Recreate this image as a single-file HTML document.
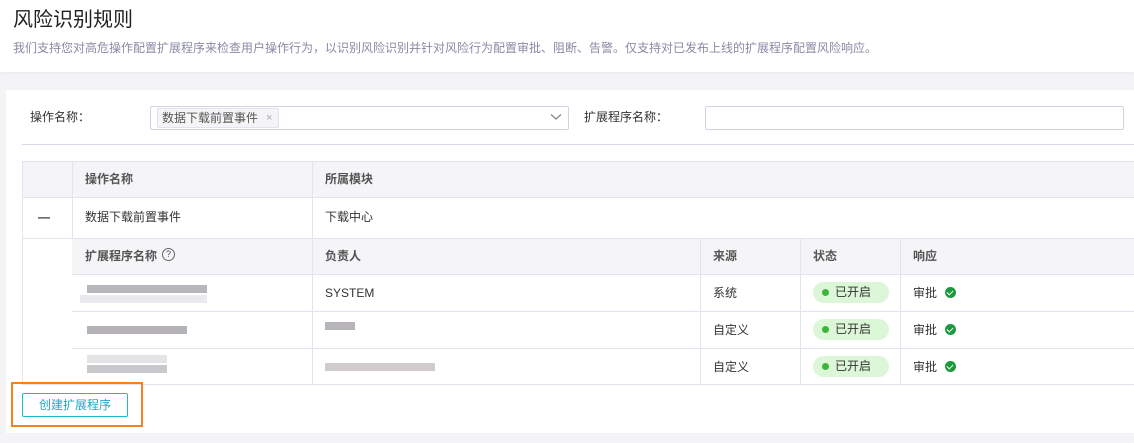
<!DOCTYPE html>
<html><head><meta charset="utf-8"><style>
*{margin:0;padding:0;box-sizing:border-box}
body{width:1134px;height:443px;overflow:hidden;background:#f4f4f7;font-family:"Liberation Sans","Noto Sans CJK SC",sans-serif;font-size:12px;color:#333;position:relative}
.a{position:absolute}
.hdr{left:0;top:0;width:1134px;height:72px;background:#fff;box-shadow:0 1px 3px rgba(0,0,0,.05)}
.card{left:6px;top:90px;width:1128px;height:343px;background:#fff}
.hl{height:1px;background:#e3e3ee}
.vl{width:1px;background:#e3e3ee}
.th{background:#f5f5f8;color:#555;font-weight:bold}
.t{position:absolute;white-space:nowrap;line-height:16px}
.pill{position:absolute;width:76px;height:21px;border-radius:11px;background:#dcf7d7;color:#333;line-height:21px;padding-left:22px}
.pill:before{content:"";position:absolute;left:9px;top:7px;width:7px;height:7px;border-radius:50%;background:#3bb63b}
.ok{position:absolute;width:11px;height:11px;border-radius:50%;background:#1a9a3c}
.ok:after{content:"";position:absolute;left:3px;top:2px;width:3px;height:5px;border:solid #fff;border-width:0 1.6px 1.6px 0;transform:rotate(45deg)}
.blur{position:absolute;height:8px}
</style></head><body>
<div class="a hdr"></div>
<div class="t" style="left:13px;top:7px;font-size:20px;line-height:26px;color:#222">风险识别规则</div>
<div class="t" style="left:13px;top:40px;color:#8a8aa6;font-size:12px">我们支持您对高危操作配置扩展程序来检查用户操作行为，以识别风险识别并针对风险行为配置审批、阻断、告警。仅支持对已发布上线的扩展程序配置风险响应。</div>
<div class="a card"></div>
<div class="t" style="left:30px;top:109px">操作名称：</div>
<div class="a" style="left:150px;top:106px;width:419px;height:24px;border:1px solid #d3d3e3;border-radius:2px"></div>
<div class="a" style="left:157px;top:108px;width:122px;height:20px;background:#f5f5f8;border:1px solid #e3e3ee;border-radius:2px"></div>
<div class="t" style="left:162px;top:110px;color:#555">数据下载前置事件</div>
<div class="t" style="left:266px;top:110px;color:#aab;font-size:11px">×</div>
<svg class="a" style="left:550px;top:113px" width="12" height="8"><path d="M1 1.5L6 6L11 1.5" fill="none" stroke="#888" stroke-width="1.3"/></svg>
<div class="t" style="left:584px;top:109px">扩展程序名称：</div>
<div class="a" style="left:705px;top:106px;width:419px;height:24px;border:1px solid #d3d3e3;border-radius:2px"></div>
<div class="a hl" style="left:22px;top:144px;width:1112px;background:#d8d8e8"></div>

<div class="a th" style="left:22px;top:161px;width:1112px;height:36px"></div>
<div class="a th" style="left:72px;top:238px;width:1062px;height:36px"></div>
<div class="a hl" style="left:22px;top:161px;width:1112px"></div>
<div class="a hl" style="left:22px;top:197px;width:1112px"></div>
<div class="a hl" style="left:22px;top:238px;width:1112px"></div>
<div class="a hl" style="left:72px;top:274px;width:1062px"></div>
<div class="a hl" style="left:72px;top:311px;width:1062px"></div>
<div class="a hl" style="left:72px;top:348px;width:1062px"></div>
<div class="a hl" style="left:22px;top:384px;width:1112px"></div>
<div class="a vl" style="left:22px;top:161px;height:224px"></div>
<div class="a vl" style="left:72px;top:161px;height:77px"></div>
<div class="a vl" style="left:312px;top:161px;height:224px"></div>
<div class="a vl" style="left:700px;top:238px;height:147px"></div>
<div class="a vl" style="left:800px;top:238px;height:147px"></div>
<div class="a vl" style="left:900px;top:238px;height:147px"></div>

<div class="t" style="left:85px;top:171px;color:#555;font-weight:bold">操作名称</div>
<div class="t" style="left:325px;top:171px;color:#555;font-weight:bold">所属模块</div>
<div class="t" style="left:38px;top:209px;font-weight:bold">—</div>
<div class="t" style="left:85px;top:209px">数据下载前置事件</div>
<div class="t" style="left:325px;top:209px">下载中心</div>
<div class="t" style="left:85px;top:248px;color:#555;font-weight:bold">扩展程序名称</div>
<div class="a" style="left:162px;top:248px;width:13px;height:13px;border:1.3px solid #666;border-radius:50%;font-size:9px;line-height:11px;text-align:center;color:#555">?</div>
<div class="t" style="left:325px;top:248px;color:#555;font-weight:bold">负责人</div>
<div class="t" style="left:713px;top:248px;color:#555;font-weight:bold">来源</div>
<div class="t" style="left:813px;top:248px;color:#555;font-weight:bold">状态</div>
<div class="t" style="left:913px;top:248px;color:#555;font-weight:bold">响应</div>

<div class="blur" style="left:87px;top:285px;width:120px;background:#b8b6ba"></div>
<div class="blur" style="left:80px;top:295px;width:127px;background:#eaeaec"></div>
<div class="blur" style="left:87px;top:326px;width:100px;background:#b5b3b8"></div>
<div class="blur" style="left:87px;top:355px;width:80px;background:#e4e3e6"></div>
<div class="blur" style="left:87px;top:365px;width:80px;background:#cac8cc"></div>
<div class="blur" style="left:325px;top:322px;width:30px;background:#b8b5ba"></div>
<div class="blur" style="left:325px;top:363px;width:110px;background:#cfcbcf"></div>
<div class="t" style="left:325px;top:285px">SYSTEM</div>

<div class="t" style="left:713px;top:285px">系统</div>
<div class="t" style="left:713px;top:322px">自定义</div>
<div class="t" style="left:713px;top:359px">自定义</div>
<div class="pill" style="left:813px;top:282px">已开启</div>
<div class="pill" style="left:813px;top:319px">已开启</div>
<div class="pill" style="left:813px;top:356px">已开启</div>
<div class="t" style="left:913px;top:285px">审批</div>
<div class="t" style="left:913px;top:322px">审批</div>
<div class="t" style="left:913px;top:359px">审批</div>
<div class="ok" style="left:945px;top:287px"></div>
<div class="ok" style="left:945px;top:324px"></div>
<div class="ok" style="left:945px;top:361px"></div>

<div class="a" style="left:11px;top:382px;width:132px;height:45px;border:2px solid #f5821f"></div>
<div class="a" style="left:22px;top:393px;width:106px;height:24px;border:1px solid #1fb8d0;border-radius:2px;color:#1fa8c8;text-align:center;line-height:22px">创建扩展程序</div>
</body></html>
